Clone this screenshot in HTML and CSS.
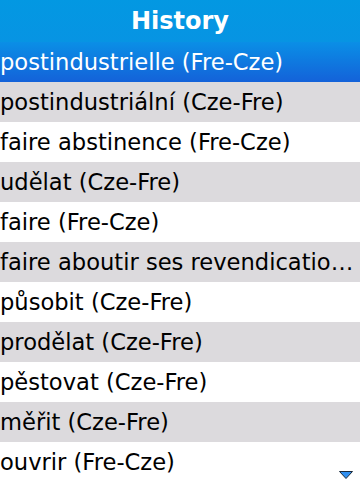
FILE: index.html
```html
<!DOCTYPE html>
<html>
<head>
<meta charset="utf-8">
<link rel="stylesheet" href="styles.css">
</head>
<body>
<div class="screen">
  <div class="header">History</div>
  <ul class="list">
    <li class="row selected">postindustrielle (Fre-Cze)</li>
    <li class="row gray">postindustriální (Cze-Fre)</li>
    <li class="row">faire abstinence (Fre-Cze)</li>
    <li class="row gray">udělat (Cze-Fre)</li>
    <li class="row">faire (Fre-Cze)</li>
    <li class="row gray">faire aboutir ses revendicatio…</li>
    <li class="row">působit (Cze-Fre)</li>
    <li class="row gray">prodělat (Cze-Fre)</li>
    <li class="row">pěstovat (Cze-Fre)</li>
    <li class="row gray">měřit (Cze-Fre)</li>
    <li class="row">ouvrir (Fre-Cze)</li>
  </ul>
  <svg class="more" width="14" height="8" viewBox="0 0 14 8">
    <polygon points="0.5,0.5 13.5,0.5 7,7.5" fill="#2f8ff0" stroke="#1b2a3a" stroke-width="1"/>
  </svg>
</div>
</body>
</html>
```
FILE: styles.css
```css
html, body {
  margin: 0;
  padding: 0;
}
body {
  font-family: "DejaVu Sans", sans-serif;
  background: #ffffff;
}
.screen {
  position: relative;
  width: 360px;
  height: 480px;
  overflow: hidden;
}
.header {
  height: 42px;
  background: linear-gradient(#0398e2, #0794e3);
  color: #ffffff;
  font-weight: bold;
  font-size: 24px;
  line-height: 42px;
  text-align: center;
}
.list {
  list-style: none;
  margin: 0;
  padding: 0;
}
.row {
  height: 40px;
  line-height: 40px;
  font-size: 22.6px;
  color: #000000;
  padding: 0;
  white-space: nowrap;
  overflow: hidden;
  background: #ffffff;
}
.row.gray {
  background: #dcdadd;
}
.row.selected {
  color: #ffffff;
  background: linear-gradient(#0a8fe6, #1462d9);
}
.more {
  position: absolute;
  right: 7px;
  bottom: 1px;
}
```
